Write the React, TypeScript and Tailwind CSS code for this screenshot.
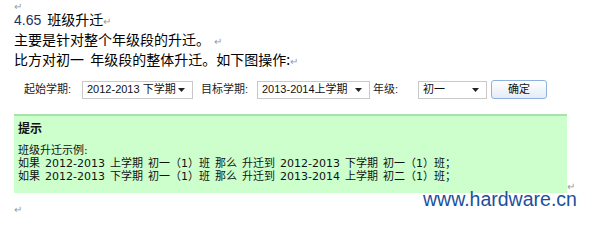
import React from 'react';

const cjk = '"Noto Sans CJK SC", sans-serif';
const mixed = '"Liberation Sans", "Noto Sans CJK SC", sans-serif';
const tip = '"DejaVu Sans", "Noto Sans CJK SC", sans-serif';

function Mark({ className = '' }: { className?: string }) {
  return <span className={`text-[10px] text-[#9a9a9a] ${className}`}>↵</span>;
}

function Select({ value, width }: { value: string; width: string }) {
  return (
    <div className={`${width} h-[18px] border border-[#c9c9c9] bg-white flex items-center justify-between pl-[4px] pr-[7px] text-[11px] text-[#111]`}>
      <span>{value}</span>
      <svg width="7" height="4" viewBox="0 0 7 4">
        <path d="M0 0h7L3.5 4z" fill="#222" />
      </svg>
    </div>
  );
}

export default function App() {
  return (
    <div className="relative w-[594px] h-[225px] bg-white overflow-hidden pl-[14px]" style={{ fontFamily: cjk }}>
      <div className="h-[10px] leading-[6px]">
        <Mark />
      </div>

      <div className="text-[14px] leading-[19px] text-black">
        <div>
          <span className="text-[#23325a]" style={{ fontFamily: mixed }}>4.65</span>
          <span className="ml-[6px]">班级升迁</span>
          <Mark />
        </div>
        <div>主要是针对整个年级段的升迁。<Mark className="ml-[4px]" /></div>
        <div>比方对初一&nbsp;&nbsp;年级段的整体升迁。如下图操作:<Mark /></div>
      </div>

      <div className="flex items-center mt-[10px] pl-[10px]" style={{ fontFamily: mixed }}>
        <span className="w-[58px] text-[11px] text-[#222]">起始学期:</span>
        <Select value="2012-2013 下学期" width="w-[111px]" />
        <span className="ml-[8px] w-[56px] text-[11px] text-[#222]">目标学期:</span>
        <Select value="2013-2014上学期" width="w-[113px]" />
        <span className="ml-[3px] w-[45px] text-[11px] text-[#222]">年级:</span>
        <Select value="初一" width="w-[69px]" />
        <button className="ml-[4px] w-[56px] h-[19px] rounded-[3px] border border-[#8fb2dc] bg-gradient-to-b from-white to-[#e4ecf6] text-[11px] text-[#111] leading-none">
          确定
        </button>
      </div>

      <div className="flex items-end mt-[15px]">
        <div className="w-[553px] border-t-2 border-[#a9e2a9] bg-[#ccffcc] pl-[4px] pt-[5px] pb-[10px] text-[11px] leading-[13px] text-[#111] [word-spacing:1.5px]" style={{ fontFamily: tip }}>
          <div className="font-bold text-[12px]" style={{ fontFamily: cjk }}>提示</div>
          <div className="mt-[10px]">班级升迁示例:</div>
          <div>如果 2012-2013 上学期 初一（1）班 那么 升迁到 2012-2013 下学期 初一（1）班；</div>
          <div>如果 2012-2013 下学期 初一（1）班 那么 升迁到 2013-2014 上学期 初二（1）班；</div>
        </div>
        <Mark className="leading-[10px] mb-[2px]" />
      </div>

      <div className="leading-[14px] mt-[6px]">
        <Mark />
      </div>

      <div className="absolute left-[423px] top-[188px] text-[19.5px] text-[#1c4f9c] leading-[22px]" style={{ fontFamily: '"Liberation Sans", sans-serif' }}>
        www.hardware.cn
      </div>
    </div>
  );
}
